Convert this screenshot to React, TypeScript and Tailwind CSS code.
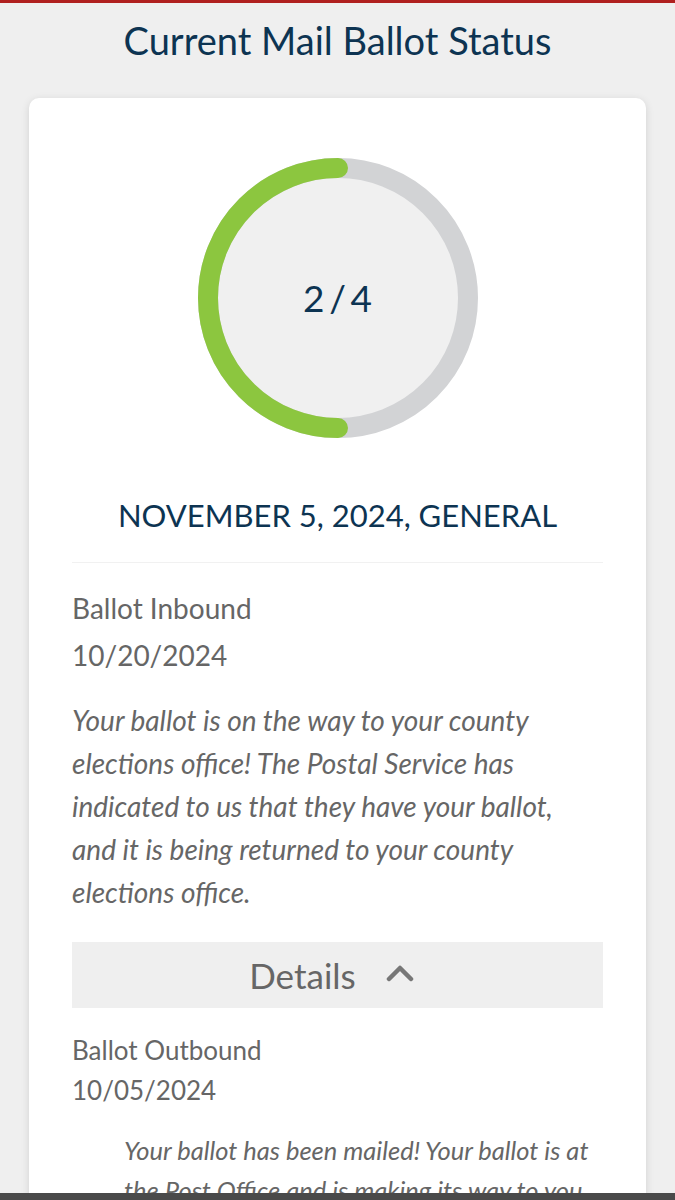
import React from "react";

function ProgressRing({ done, total }: { done: number; total: number }) {
  return (
    <div className="relative w-[280px] h-[280px]">
      <svg width="280" height="280" viewBox="0 0 280 280" className="absolute inset-0">
        <circle cx="140" cy="140" r="122" fill="#f0f0f0" />
        <circle cx="140" cy="140" r="130" fill="none" stroke="#d2d3d5" strokeWidth="20" />
        <path
          d="M140 10 A130 130 0 0 0 140 270"
          fill="none"
          stroke="#8cc63f"
          strokeWidth="20"
          strokeLinecap="round"
        />
      </svg>
      <div className="absolute inset-0 flex items-center justify-center text-[37px] text-[#0d3452]">
        {done}&thinsp;/&thinsp;{total}
      </div>
    </div>
  );
}

export default function App() {
  return (
    <div
      className="relative h-[1200px] overflow-hidden bg-[#efefef] border-t-[3px] border-[#b0201f]"
      style={{ fontFamily: "Lato, 'Open Sans', sans-serif" }}
    >
      <h1 className="text-center text-[38px] leading-[46px] pt-[14px] text-[#0d3452]">
        Current Mail Ballot Status
      </h1>

      <div className="mx-[29px] mt-[35px] bg-white rounded-[10px] shadow-[0_2px_8px_rgba(0,0,0,0.12)] px-[43px] pt-[60px] pb-10">
        <div className="flex justify-center">
          <ProgressRing done={2} total={4} />
        </div>

        <h2 className="mt-[58px] text-center text-[31px] leading-[38px] text-[#0d3452]">
          NOVEMBER 5, 2024, GENERAL
        </h2>
        <div className="mt-[28px] h-px bg-[#f1f1f1]" />

        <div className="mt-[22px] text-[28px] leading-[47px] text-[#666666]">
          <div>Ballot Inbound</div>
          <div>10/20/2024</div>
        </div>
        <p className="mt-[20px] italic text-[28px] leading-[43px] text-[#666666]">
          Your ballot is on the way to your county elections office! The Postal Service has
          indicated to us that they have your ballot, and it is being returned to your county
          elections office.
        </p>

        <button
          type="button"
          className="mt-[28px] w-full h-[66px] bg-[#efefef] flex items-center justify-center gap-[30px] pr-[12px] text-[35px] text-[#666666]"
        >
          <span>Details</span>
          <svg width="28" height="18" viewBox="0 0 28 18" className="mt-[-4px]">
            <path d="M3 15 L14 4 L25 15" fill="none" stroke="#777777" strokeWidth="4.5" strokeLinecap="round" strokeLinejoin="round" />
          </svg>
        </button>

        <div className="mt-[22px] text-[26px] leading-[40px] text-[#666666]">
          <div>Ballot Outbound</div>
          <div>10/05/2024</div>
        </div>
        <p className="mt-[20px] pl-[52px] mr-[-6px] italic text-[25.5px] leading-[40px] text-[#666666]">
          Your ballot has been mailed! Your ballot is at the Post Office and is making its way to
          you.
        </p>
      </div>

      <div className="absolute left-0 right-0 bottom-0 h-[7px] bg-[#4a4a4a]" />
    </div>
  );
}
